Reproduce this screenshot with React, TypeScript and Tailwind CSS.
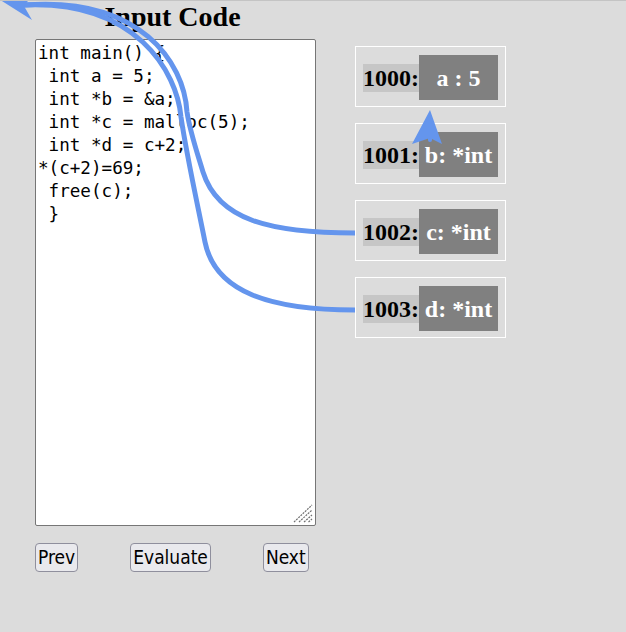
const code = `int main() {
 int a = 5;
 int *b = &a;
 int *c = malloc(5);
 int *d = c+2;
*(c+2)=69;
 free(c);
 }`;

const cells = [
  { addr: "1000:", label: "a : 5" },
  { addr: "1001:", label: "b: *int" },
  { addr: "1002:", label: "c: *int" },
  { addr: "1003:", label: "d: *int" },
];

const MemCell = ({ addr, label }: { addr: string; label: string }) => (
  <div className="w-[151px] h-[61px] border border-white flex items-start pt-[8px] pl-[7px]">
    <div className="flex items-center">
      <span className="w-[56px] bg-[#c6c6c6] text-black text-[24px] leading-[28px] font-bold font-['Liberation_Serif',serif]">
        {addr}
      </span>
      <div className="w-[79px] h-[45px] bg-[#808080] text-white text-[24px] font-bold font-['Liberation_Serif',serif] flex items-center justify-center whitespace-pre">
        {label}
      </div>
    </div>
  </div>
);

const Btn = ({ children }: { children: string }) => (
  <button className="h-[29px] px-[2px] border border-[#8f8f9d] rounded-[4px] bg-[#e9e9ed] text-black text-[19px] leading-[27px] font-['DejaVu_Sans_Condensed','DejaVu_Sans',sans-serif] [font-stretch:condensed]">
    {children}
  </button>
);

export default function App() {
  return (
    <div className="relative w-[626px] h-[632px] bg-[#dcdcdc] border-t border-[#c4c4c4] overflow-hidden">
      <div className="flex items-start">
        <div className="ml-[35px] w-[281px] flex flex-col">
          <h2 className="pr-[6px] text-center text-black text-[28px] leading-[32px] font-bold font-['Liberation_Serif',serif]">
            Input Code
          </h2>
          <div className="relative mt-[6px]">
            <textarea
              defaultValue={code}
              spellCheck={false}
              className="block w-[281px] h-[487px] resize-none border border-[#767676] rounded-[2px] bg-white px-[2px] pt-[2px] text-black text-[17.6px] leading-[23px] font-['DejaVu_Sans_Mono',monospace] outline-none"
            />
            {/* resize grip */}
            <svg className="absolute right-[3px] bottom-[3px] pointer-events-none" width="20" height="19" viewBox="0 0 20 19">
              <g stroke="#707070" strokeWidth="1.2" strokeDasharray="2 1">
                <line x1="1" y1="18" x2="19" y2="1" />
                <line x1="6" y1="18" x2="19" y2="6" />
                <line x1="11" y1="18" x2="19" y2="11" />
                <line x1="15.5" y1="18" x2="19" y2="15" />
              </g>
            </svg>
          </div>
          <div className="mt-[17px] flex gap-[52px]">
            <Btn>Prev</Btn>
            <Btn>Evaluate</Btn>
            <Btn>Next</Btn>
          </div>
        </div>
        <div className="ml-[39px] mt-[45px] flex flex-col gap-[16px]">
          {cells.map((c) => (
            <MemCell key={c.addr} addr={c.addr} label={c.label} />
          ))}
        </div>
      </div>

      {/* pointer arrows */}
      <svg
        className="absolute left-0 top-0 pointer-events-none"
        width="626"
        height="632"
        viewBox="0 -1 626 632"
      >
        <g fill="none" stroke="#6495ed" strokeWidth="5">
          <path d="M355,231 C270,231 218,218 203,170 C197,150 190,130 187,110 C184,60 140,-6 24,3" />
          <path d="M355,308 C270,308 215,290 205,240 C197,200 186,150 181,115 C177,70 136,-2 24,3" />
        </g>
        <polygon points="-6,-6 32,18 24,4 38,-14" fill="#6495ed" />
        <rect x="428" y="132" width="4" height="8" rx="2" fill="#6495ed" />
        <polygon points="430,108 442,142 430,136 412,142" fill="#6495ed" />
      </svg>
    </div>
  );
}
